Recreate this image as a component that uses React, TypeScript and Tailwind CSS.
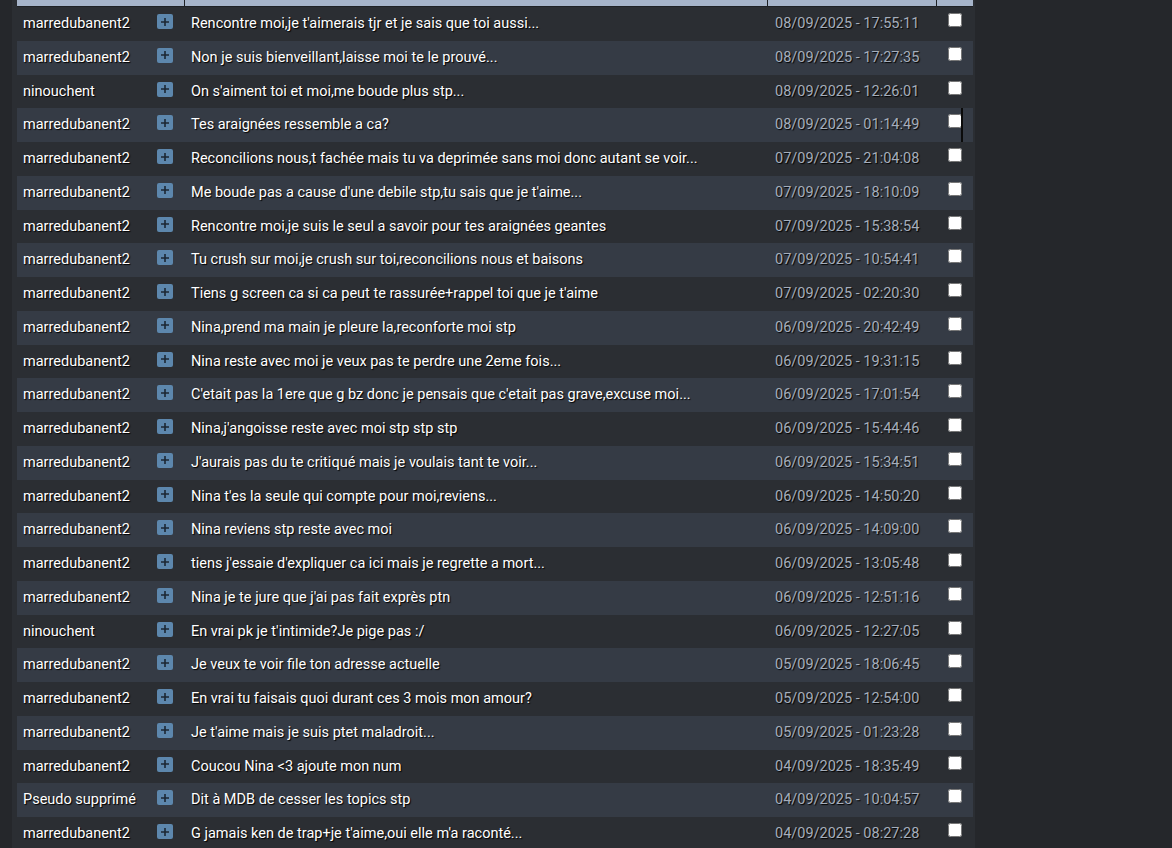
import React from "react";

type Msg = { author: string; title: string; date: string };

const messages: Msg[] = [
	{ author: "marredubanent2", title: "Rencontre moi,je t'aimerais tjr et je sais que toi aussi...", date: "08/09/2025 - 17:55:11" },
	{ author: "marredubanent2", title: "Non je suis bienveillant,laisse moi te le prouvé...", date: "08/09/2025 - 17:27:35" },
	{ author: "ninouchent", title: "On s'aiment toi et moi,me boude plus stp...", date: "08/09/2025 - 12:26:01" },
	{ author: "marredubanent2", title: "Tes araignées ressemble a ca?", date: "08/09/2025 - 01:14:49" },
	{ author: "marredubanent2", title: "Reconcilions nous,t fachée mais tu va deprimée sans moi donc autant se voir...", date: "07/09/2025 - 21:04:08" },
	{ author: "marredubanent2", title: "Me boude pas a cause d'une debile stp,tu sais que je t'aime...", date: "07/09/2025 - 18:10:09" },
	{ author: "marredubanent2", title: "Rencontre moi,je suis le seul a savoir pour tes araignées geantes", date: "07/09/2025 - 15:38:54" },
	{ author: "marredubanent2", title: "Tu crush sur moi,je crush sur toi,reconcilions nous et baisons", date: "07/09/2025 - 10:54:41" },
	{ author: "marredubanent2", title: "Tiens g screen ca si ca peut te rassurée+rappel toi que je t'aime", date: "07/09/2025 - 02:20:30" },
	{ author: "marredubanent2", title: "Nina,prend ma main je pleure la,reconforte moi stp", date: "06/09/2025 - 20:42:49" },
	{ author: "marredubanent2", title: "Nina reste avec moi je veux pas te perdre une 2eme fois...", date: "06/09/2025 - 19:31:15" },
	{ author: "marredubanent2", title: "C'etait pas la 1ere que g bz donc je pensais que c'etait pas grave,excuse moi...", date: "06/09/2025 - 17:01:54" },
	{ author: "marredubanent2", title: "Nina,j'angoisse reste avec moi stp stp stp", date: "06/09/2025 - 15:44:46" },
	{ author: "marredubanent2", title: "J'aurais pas du te critiqué mais je voulais tant te voir...", date: "06/09/2025 - 15:34:51" },
	{ author: "marredubanent2", title: "Nina t'es la seule qui compte pour moi,reviens...", date: "06/09/2025 - 14:50:20" },
	{ author: "marredubanent2", title: "Nina reviens stp reste avec moi", date: "06/09/2025 - 14:09:00" },
	{ author: "marredubanent2", title: "tiens j'essaie d'expliquer ca ici mais je regrette a mort...", date: "06/09/2025 - 13:05:48" },
	{ author: "marredubanent2", title: "Nina je te jure que j'ai pas fait exprès ptn", date: "06/09/2025 - 12:51:16" },
	{ author: "ninouchent", title: "En vrai pk je t'intimide?Je pige pas :/", date: "06/09/2025 - 12:27:05" },
	{ author: "marredubanent2", title: "Je veux te voir file ton adresse actuelle", date: "05/09/2025 - 18:06:45" },
	{ author: "marredubanent2", title: "En vrai tu faisais quoi durant ces 3 mois mon amour?", date: "05/09/2025 - 12:54:00" },
	{ author: "marredubanent2", title: "Je t'aime mais je suis ptet maladroit...", date: "05/09/2025 - 01:23:28" },
	{ author: "marredubanent2", title: "Coucou Nina <3 ajoute mon num", date: "04/09/2025 - 18:35:49" },
	{ author: "Pseudo supprimé", title: "Dit à MDB de cesser les topics stp", date: "04/09/2025 - 10:04:57" },
	{ author: "marredubanent2", title: "G jamais ken de trap+je t'aime,oui elle m'a raconté...", date: "04/09/2025 - 08:27:28" },
];

function PlusIcon() {
	return (
		<span className="flex h-[15px] w-[16px] items-center justify-center rounded-[2px] bg-[#5d87ad]">
			<svg width="10" height="10" viewBox="0 0 10 10">
				<path d="M5 1v8M1 5h8" stroke="#1c2733" strokeWidth="1.6" />
			</svg>
		</span>
	);
}

export default function App() {
	return (
		<div className="flex h-[848px] w-[1172px] overflow-hidden bg-[#25272b] font-['Roboto',sans-serif] text-[14.5px]">
			<div className="w-[12px]" />
			<div className="w-[963px] bg-[#2b2e33] pl-[5px] pr-[2px]">
				<div className="flex h-[7px] border-b border-[#1e2125] bg-[#a6b4ca]">
					<div className="w-[167px]" />
					<div className="w-[583px] border-l border-[#1e2125]" />
					<div className="w-[169px] border-l border-[#1e2125]" />
					<div className="flex-1 border-l border-[#1e2125]" />
				</div>
				{messages.map((m, i) => (
					<div
						key={i}
						className={`flex h-[33.75px] ${i % 2 === 1 ? "bg-[#353b45]" : "bg-[#2b2e33]"} text-white [text-shadow:1px_1px_1px_#000]`}
					>
						<div className="flex w-[167px] items-start justify-between pt-[7px] pl-[6px] pr-[11px]">
							<span className="leading-[20px]">{m.author}</span>
							<PlusIcon />
						</div>
						<div className="w-[583px] pt-[7px] pl-[7px] leading-[20px] whitespace-nowrap">{m.title}</div>
						<div className="w-[169px] pt-[7px] pl-[8px] leading-[20px] text-[#a6aebb]">{m.date}</div>
						<div className="relative flex-1 pt-[6px] pl-[12px]">
							<input type="checkbox" className="m-0 block h-[14px] w-[14px]" />
							{i === 3 && <span className="absolute top-0 left-[25px] h-full w-[2px] bg-[#0b0b0b]" />}
						</div>
					</div>
				))}
			</div>
			<div className="flex-1" />
		</div>
	);
}
